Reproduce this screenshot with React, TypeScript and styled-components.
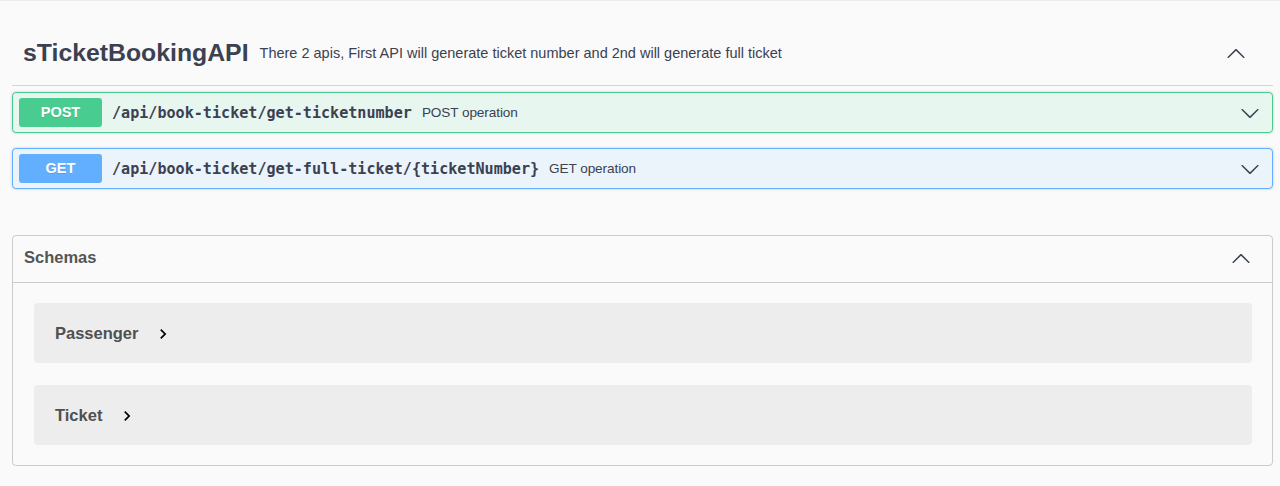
import React from "react";
import styled, { createGlobalStyle } from "styled-components";

const GlobalStyle = createGlobalStyle`
  html, body {
    margin: 0;
    padding: 0;
    background: #fafafa;
  }
  body {
    font-family: "Liberation Sans", Arial, sans-serif;
    color: #3b4151;
  }
`;

const Page = styled.div`
  box-sizing: border-box;
  width: 1280px;
  height: 486px;
  overflow: hidden;
  border-top: 1px solid #ececec;
  padding: 20px 7px 0 12px;
`;

const TagSection = styled.section`
  display: flex;
  flex-direction: column;
`;

const TagHeading = styled.h3`
  display: flex;
  align-items: center;
  box-sizing: border-box;
  height: 65px;
  margin: 0 0 6px;
  padding: 0 27px 0 11px;
  border-bottom: 1px solid rgba(59, 65, 81, 0.2);
  font-size: 24.8px;
  font-weight: 700;
  color: #3b4151;
`;

const TagName = styled.span`
  white-space: nowrap;
`;

const TagDescription = styled.small`
  flex: 1;
  padding: 0 11px;
  font-size: 14.5px;
  font-weight: 400;
  color: #3b4151;
`;

type Method = "post" | "get";

const methodColors: Record<Method, { main: string; bg: string }> = {
  post: { main: "#49cc90", bg: "#e8f6f0" },
  get: { main: "#61affe", bg: "#ebf3fb" },
};

const OpBlock = styled.div<{ $method: Method }>`
  margin: 0 0 15px;
  border: 1px solid ${(p) => methodColors[p.$method].main};
  border-radius: 4px;
  background: ${(p) => methodColors[p.$method].bg};
  box-shadow: 0 0 3px rgba(0, 0, 0, 0.19);
`;

const Summary = styled.div`
  display: flex;
  align-items: center;
  padding: 5px 6px 5px 6px;
`;

const MethodBadge = styled.span<{ $method: Method }>`
  display: inline-block;
  box-sizing: border-box;
  min-width: 83px;
  padding: 6px 0;
  line-height: 17px;
  border-radius: 3px;
  background: ${(p) => methodColors[p.$method].main};
  color: #fff;
  font-size: 14.5px;
  font-weight: 700;
  text-align: center;
  text-shadow: 0 1px 0 rgba(0, 0, 0, 0.1);
`;

const Path = styled.span`
  padding: 0 10px;
  font-family: "DejaVu Sans Mono", "Liberation Mono", monospace;
  font-size: 15.1px;
  font-weight: 700;
  color: #3b4151;
  white-space: nowrap;
`;

const OpDescription = styled.span`
  flex: 1;
  font-size: 13.6px;
  color: #3b4151;
  letter-spacing: -0.1px;
`;

const ArrowButton = styled.span<{ $mr?: number }>`
  display: flex;
  align-items: center;
  justify-content: center;
  width: 20px;
  height: 20px;
  margin-right: ${(p) => p.$mr ?? 6}px;
  color: #3b4151;
`;

const Models = styled.section`
  margin-top: 31px;
  border: 1px solid rgba(59, 65, 81, 0.25);
  border-radius: 4px;
  padding-bottom: 20px;
`;

const ModelsHeader = styled.h4`
  display: flex;
  align-items: center;
  justify-content: space-between;
  box-sizing: border-box;
  height: 47px;
  margin: 0 0 20px;
  padding: 0 21px 3px 11px;
  border-bottom: 1px solid rgba(59, 65, 81, 0.25);
  font-size: 16.5px;
  font-weight: 700;
  color: #555555;
`;

const ModelContainer = styled.div`
  display: flex;
  align-items: center;
  box-sizing: border-box;
  height: 60px;
  margin: 0 20px 22px 21px;
  padding: 0 21px 0 21px;
  border-radius: 4px;
  background: #ededed;
  &:last-child {
    margin-bottom: 0;
  }
`;

const ModelTitle = styled.span`
  font-size: 16.5px;
  font-weight: 700;
  color: #505050;
  padding-top: 1px;
`;

const ModelToggle = styled.span`
  display: flex;
  align-items: center;
  margin-left: 15px;
  padding-top: 2px;
  color: #000;
`;

const ChevronDown = () => (
  <svg width="20" height="20" viewBox="0 0 20 20" fill="currentColor">
    <path d="M17.418 6.109c.272-.268.709-.268.979 0s.271.701 0 .969l-7.908 7.83c-.27.268-.707.268-.979 0l-7.908-7.83c-.27-.268-.27-.701 0-.969.271-.268.709-.268.979 0L10 13.25l7.418-7.141z" />
  </svg>
);

const ChevronUp = () => (
  <svg width="20" height="20" viewBox="0 0 20 20" fill="currentColor">
    <path d="M17.418 14.908c.272.268.709.268.979 0s.271-.701 0-.969l-7.908-7.83c-.27-.268-.707-.268-.979 0l-7.908 7.83c-.27.268-.27.701 0 .969.271.268.709.268.979 0L10 7.767l7.418 7.141z" />
  </svg>
);

const ChevronRight = () => (
  <svg width="20" height="20" viewBox="0 0 24 24" fill="currentColor">
    <path d="M10 6 8.59 7.41 13.17 12l-4.58 4.59L10 18l6-6z" />
  </svg>
);

const operations: { method: Method; path: string; description: string }[] = [
  { method: "post", path: "/api/book-ticket/get-ticketnumber", description: "POST operation" },
  { method: "get", path: "/api/book-ticket/get-full-ticket/{ticketNumber}", description: "GET operation" },
];

const schemas = ["Passenger", "Ticket"];

export default function App() {
  return (
    <>
      <GlobalStyle />
      <Page>
        <TagSection>
          <TagHeading>
            <TagName>sTicketBookingAPI</TagName>
            <TagDescription>
              There 2 apis, First API will generate ticket number and 2nd will generate full ticket
            </TagDescription>
            <ArrowButton $mr={0}>
              <ChevronUp />
            </ArrowButton>
          </TagHeading>
          {operations.map((op) => (
            <OpBlock key={op.path} $method={op.method}>
              <Summary>
                <MethodBadge $method={op.method}>{op.method.toUpperCase()}</MethodBadge>
                <Path>{op.path}</Path>
                <OpDescription>{op.description}</OpDescription>
                <ArrowButton>
                  <ChevronDown />
                </ArrowButton>
              </Summary>
            </OpBlock>
          ))}
        </TagSection>
        <Models>
          <ModelsHeader>
            <span>Schemas</span>
            <ArrowButton $mr={0}>
              <ChevronUp />
            </ArrowButton>
          </ModelsHeader>
          {schemas.map((name) => (
            <ModelContainer key={name}>
              <ModelTitle>{name}</ModelTitle>
              <ModelToggle>
                <ChevronRight />
              </ModelToggle>
            </ModelContainer>
          ))}
        </Models>
      </Page>
    </>
  );
}
